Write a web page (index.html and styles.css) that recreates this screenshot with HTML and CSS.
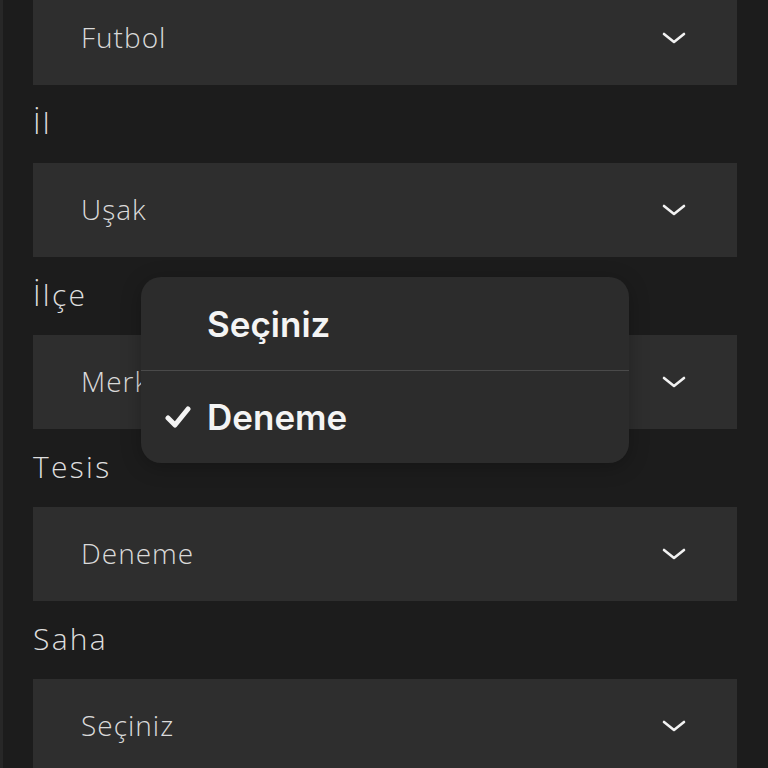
FILE: index.html
```html
<!doctype html>
<html lang="tr">
    <head>
        <meta charset="utf-8">
        <title>Rezervasyon</title>
        <link rel="stylesheet" href="styles.css">
    </head>
    <body>
        <div class="page">
            <form class="form">
                <div class="select">
                    <span>Futbol</span>
                    <svg class="chev" viewBox="0 0 24 12"><path d="M2 2 L12 10 L22 2"/></svg>
                </div>

                <div class="label">İl</div>
                <div class="select">
                    <span>Uşak</span>
                    <svg class="chev" viewBox="0 0 24 12"><path d="M2 2 L12 10 L22 2"/></svg>
                </div>

                <div class="label">İlçe</div>
                <div class="select">
                    <span>Merkez</span>
                    <svg class="chev" viewBox="0 0 24 12"><path d="M2 2 L12 10 L22 2"/></svg>
                </div>

                <div class="label">Tesis</div>
                <div class="select">
                    <span>Deneme</span>
                    <svg class="chev" viewBox="0 0 24 12"><path d="M2 2 L12 10 L22 2"/></svg>
                </div>

                <div class="label">Saha</div>
                <div class="select">
                    <span>Seçiniz</span>
                    <svg class="chev" viewBox="0 0 24 12"><path d="M2 2 L12 10 L22 2"/></svg>
                </div>
            </form>

            <!-- native picker popup for Tesis -->
            <div class="picker">
                <div class="option">Seçiniz</div>
                <div class="option checked">
                    <svg class="tick" viewBox="0 0 26 22"><path d="M3 12 L10 19 L23 3"/></svg>
                    Deneme
                </div>
            </div>
        </div>
    </body>
</html>
```

FILE: styles.css
```css
body {
    margin: 0;
    background: #1c1c1c;
    font-family: "Open Sans", Lato, sans-serif;
    overflow: hidden;
}
.page {
    position: relative;
    display: flow-root;
    height: 768px;
    border-left: 3px solid #272727;
    box-sizing: border-box;
}
.form {
    margin: -9px 0 0 30px;
    width: 704px;
    display: flex;
    flex-direction: column;
}
.label {
    height: 78px;
    line-height: 76px;
    font-size: 30px;
    font-weight: 300;
    color: #dedede;
    letter-spacing: 2.3px;
}
.select {
    height: 94px;
    background: #2e2e2e;
    display: flex;
    align-items: center;
    justify-content: space-between;
    padding: 0 51px 0 48px;
    font-size: 28px;
    font-weight: 300;
    color: #dadada;
    letter-spacing: 1px;
}
.select span {
    margin-top: -3px;
}
.chev {
    width: 24px;
    height: 12px;
    fill: none;
    stroke: #f2f2f2;
    stroke-width: 2.6;
    stroke-linecap: round;
    stroke-linejoin: round;
}
.picker {
    position: absolute;
    left: 138px;
    top: 277px;
    width: 488px;
    background: #2c2c2c;
    border-radius: 20px;
    font-family: Inter, "Liberation Sans", sans-serif;
    font-weight: 600;
    font-size: 35px;
    color: #f4f4f4;
    box-shadow: 0 4px 20px rgba(0, 0, 0, 0.25);
}
.option {
    height: 93px;
    display: flex;
    align-items: center;
    padding-left: 66px;
    position: relative;
}
.option + .option {
    border-top: 1px solid #4a4a4a;
    height: 92px;
}
.tick {
    position: absolute;
    left: 24px;
    width: 26px;
    height: 22px;
    fill: none;
    stroke: #f4f4f4;
    stroke-width: 5;
    stroke-linecap: round;
    stroke-linejoin: round;
}
```
